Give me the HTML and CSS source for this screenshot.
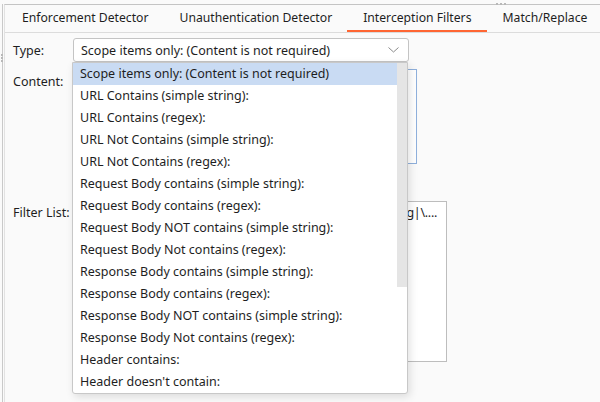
FILE: index.html
```html
<!DOCTYPE html>
<html>
<head>
<meta charset="utf-8">
<link rel="stylesheet" href="styles.css">
</head>
<body>
<div class="app">
  <div class="panel">
    <div class="inner">
      <div class="tabs">
        <div class="tab">Enforcement Detector</div>
        <div class="tab">Unauthentication Detector</div>
        <div class="tab active">Interception Filters</div>
        <div class="tab">Match/Replace</div>
      </div>
      <div class="form">
        <div class="row type-row">
          <div class="label">Type:</div>
          <div class="combo">
            <span class="combo-text">Scope items only: (Content is not required)</span>
            <svg class="chev" width="11" height="6" viewBox="0 0 11 6"><path d="M0.5 0.5 L5.5 5 L10.5 0.5" fill="none" stroke="#8a8a8a" stroke-width="1"/></svg>
          </div>
        </div>
        <div class="row content-row">
          <div class="label">Content:</div>
          <div class="textarea focus"></div>
        </div>
        <div class="row filter-row">
          <div class="label">Filter List:</div>
          <div class="textarea filter"><span class="filter-text">.*\.(js|css|png|jpg|svg|\....</span></div>
        </div>
      </div>
    </div>
    <div class="grip-top"><i></i><i></i><i></i></div>
    <div class="grip-left"><i></i><i></i><i></i></div>
  </div>

  <div class="dropdown">
    <div class="list">
      <div class="item sel">Scope items only: (Content is not required)</div>
      <div class="item">URL Contains (simple string):</div>
      <div class="item">URL Contains (regex):</div>
      <div class="item">URL Not Contains (simple string):</div>
      <div class="item">URL Not Contains (regex):</div>
      <div class="item">Request Body contains (simple string):</div>
      <div class="item">Request Body contains (regex):</div>
      <div class="item">Request Body NOT contains (simple string):</div>
      <div class="item">Request Body Not contains (regex):</div>
      <div class="item">Response Body contains (simple string):</div>
      <div class="item">Response Body contains (regex):</div>
      <div class="item">Response Body NOT contains (simple string):</div>
      <div class="item">Response Body Not contains (regex):</div>
      <div class="item">Header contains:</div>
      <div class="item">Header doesn't contain:</div>
    </div>
    <div class="scroll"><div class="thumb"></div></div>
  </div>
</div>
</body>
</html>
```

FILE: styles.css
```css
html, body {
  margin: 0;
  padding: 0;
  background: #fafafa;
}
body {
  width: 600px;
  height: 402px;
  overflow: hidden;
  font-family: "Noto Sans", "Open Sans", sans-serif;
  font-size: 12.5px;
  color: #1e1e1e;
}
.app {
  position: relative;
  width: 600px;
  height: 402px;
  padding-top: 4px;
  box-sizing: border-box;
}
.panel {
  position: relative;
  margin-left: 2px;
  height: 398px;
  border-left: 1px solid #c9c9c9;
  box-sizing: border-box;
}
.inner {
  margin-left: 1px;
  border-left: 1px solid #e2e2e2;
  border-top: 1px solid #c4c4c4;
  height: 100%;
  box-sizing: border-box;
}
.tabs {
  display: flex;
  height: 27px;
  border-bottom: 1px solid #dcdcdc;
  padding-left: 1px;
}
.tab {
  padding: 0 15px 0 16px;
  line-height: 26px;
  font-size: 12.2px;
  white-space: nowrap;
  border-bottom: 2px solid transparent;
  box-sizing: border-box;
  height: 27px;
}
.tab.active {
  border-bottom-color: #ff6633;
}
.form {
  padding: 5px 0 0 8px;
}
.row {
  display: flex;
}
.label {
  width: 60px;
  flex: none;
}
.type-row {
  height: 24px;
  align-items: center;
}
.combo {
  width: 336px;
  height: 24px;
  box-sizing: border-box;
  border: 1px solid #c4c4c4;
  border-radius: 3px;
  background: #fff;
  display: flex;
  align-items: center;
  justify-content: space-between;
  padding: 0 4px 0 7px;
}
.chev {
  margin-right: 5px;
}
.content-row {
  margin-top: 7px;
}
.content-row .label {
  padding-top: 4px;
}
.textarea {
  width: 344px;
  box-sizing: border-box;
  background: #fff;
  border: 1px solid #bdbdbd;
}
.textarea.focus {
  height: 95px;
  border-color: #8fb0dc;
}
.filter-row {
  margin-top: 37px;
}
.filter-row .label {
  padding-top: 3px;
}
.textarea.filter {
  width: 374px;
  height: 161px;
  text-align: right;
  padding: 2px 9px 0 0;
  white-space: nowrap;
  overflow: hidden;
  letter-spacing: -0.3px;
}
.grip-top {
  position: absolute;
  top: -1px;
  left: 493px;
  display: flex;
  gap: 2px;
}
.grip-top i, .grip-left i {
  display: block;
  width: 2px;
  height: 2px;
  background: #b8b8b8;
}
.grip-left {
  position: absolute;
  left: -2px;
  top: 50px;
  display: flex;
  flex-direction: column;
  gap: 1px;
}
.dropdown {
  position: absolute;
  left: 72px;
  top: 62px;
  width: 336px;
  height: 332px;
  box-sizing: border-box;
  background: #fff;
  border: 1px solid #c8c8c8;
  border-radius: 0 0 3px 3px;
  box-shadow: 2px 3px 8px rgba(0, 0, 0, 0.12);
  display: flex;
}
.list {
  flex: 1;
}
.item {
  height: 22px;
  line-height: 22px;
  padding-left: 7px;
  white-space: nowrap;
}
.item.sel {
  background: #c9dbf3;
}
.scroll {
  width: 10px;
  flex: none;
}
.thumb {
  height: 224px;
  background: #e5e5e5;
}
```
